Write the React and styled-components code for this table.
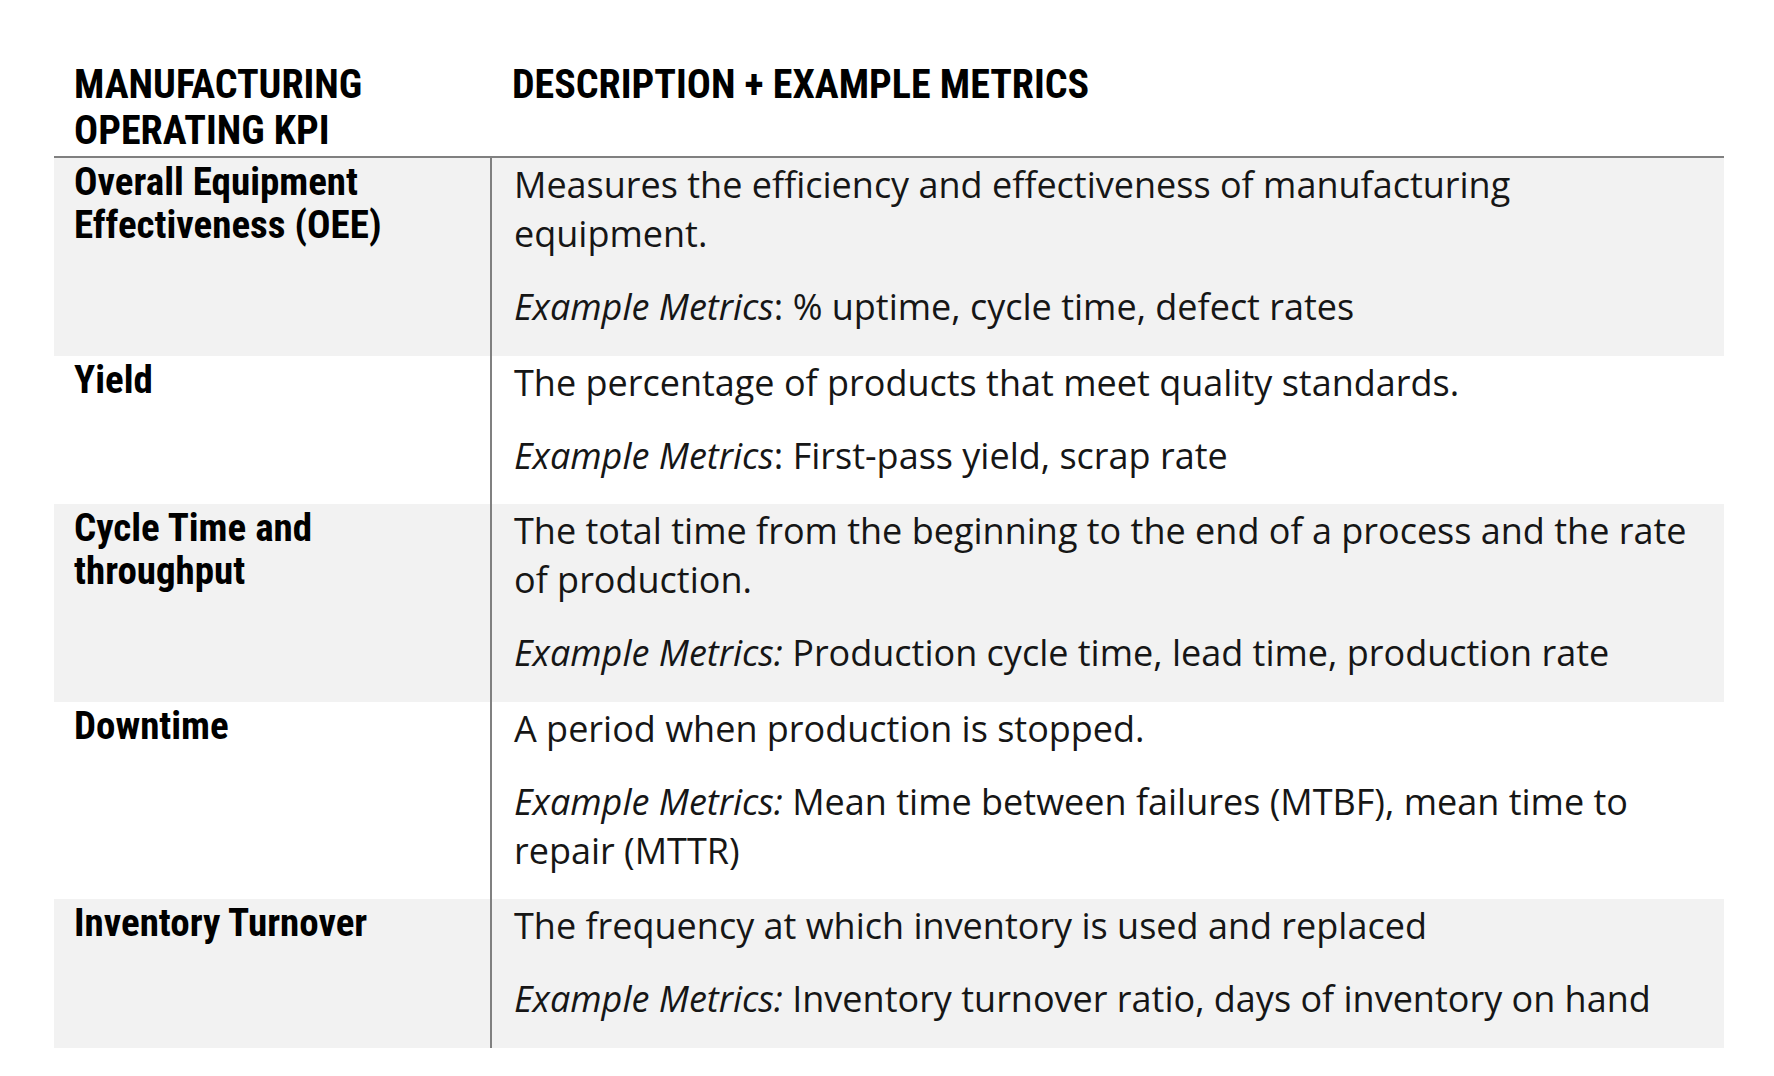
import React from "react";
import styled, { createGlobalStyle } from "styled-components";

const Global = createGlobalStyle`
  html, body { margin: 0; padding: 0; background: #ffffff; }
  body { font-family: "Open Sans", "Noto Sans", sans-serif; color: #000; }
`;

const Page = styled.div`
  padding: 62px 50px 0 54px;
`;

const Table = styled.div`
  width: 1670px;
  display: flex;
  flex-direction: column;
`;

const HeaderRow = styled.div`
  display: grid;
  grid-template-columns: 438px 1fr;
  border-bottom: 2px solid #808080;
  padding-bottom: 2px;
`;

const HeaderCell = styled.div`
  font-family: Roboto, "Liberation Sans", sans-serif;
  font-stretch: condensed;
  font-weight: 700;
  font-size: 40px;
  line-height: 46px;
  padding-left: ${(p) => p.$pl}px;
`;

const Row = styled.div`
  display: grid;
  grid-template-columns: 436px 1fr;
  background: ${(p) => (p.$shaded ? "#f2f2f2" : "#ffffff")};
`;

const KpiCell = styled.div`
  font-family: Roboto, "Liberation Sans", sans-serif;
  font-stretch: condensed;
  font-weight: 700;
  font-size: 39px;
  line-height: 43px;
  padding: 3px 10px 0 20px;
`;

const DescCell = styled.div`
  border-left: 2px solid #808080;
  padding: 2px 21px 0 22px;
  font-family: "Open Sans", "Noto Sans", sans-serif;
  font-weight: 400;
  font-size: 36px;
  line-height: 49px;
  color: #161616;
`;

const Para = styled.p`
  margin: 0 0 24.25px 0;
`;

const Em = styled.em`
  font-style: italic;
`;

const rows = [
  {
    kpi: ["Overall Equipment", "Effectiveness (OEE)"],
    desc: "Measures the efficiency and effectiveness of manufacturing equipment.",
    label: "Example Metrics",
    colonInside: false,
    metrics: "% uptime, cycle time, defect rates",
  },
  {
    kpi: ["Yield"],
    desc: "The percentage of products that meet quality standards.",
    label: "Example Metrics",
    colonInside: false,
    metrics: "First-pass yield, scrap rate",
  },
  {
    kpi: ["Cycle Time and", "throughput"],
    desc: "The total time from the beginning to the end of a process and the rate of production.",
    label: "Example Metrics:",
    colonInside: true,
    metrics: "Production cycle time, lead time, production rate",
  },
  {
    kpi: ["Downtime"],
    desc: "A period when production is stopped.",
    label: "Example Metrics:",
    colonInside: true,
    metrics: "Mean time between failures (MTBF), mean time to repair (MTTR)",
  },
  {
    kpi: ["Inventory Turnover"],
    desc: "The frequency at which inventory is used and replaced",
    label: "Example Metrics:",
    colonInside: true,
    metrics: "Inventory turnover ratio, days of inventory on hand",
  },
];

export default function App() {
  return (
    <>
      <Global />
      <Page>
        <Table>
          <HeaderRow>
            <HeaderCell $pl={20}>
              MANUFACTURING
              <br />
              OPERATING KPI
            </HeaderCell>
            <HeaderCell $pl={20}>DESCRIPTION + EXAMPLE METRICS</HeaderCell>
          </HeaderRow>
          {rows.map((r, i) => (
            <Row key={i} $shaded={i % 2 === 0}>
              <KpiCell>
                {r.kpi.map((l, j) => (
                  <React.Fragment key={j}>
                    {j > 0 && <br />}
                    {l}
                  </React.Fragment>
                ))}
              </KpiCell>
              <DescCell>
                <Para>{r.desc}</Para>
                <Para>
                  <Em>{r.label}</Em>
                  {r.colonInside ? " " : ": "}
                  {r.metrics}
                </Para>
              </DescCell>
            </Row>
          ))}
        </Table>
      </Page>
    </>
  );
}
